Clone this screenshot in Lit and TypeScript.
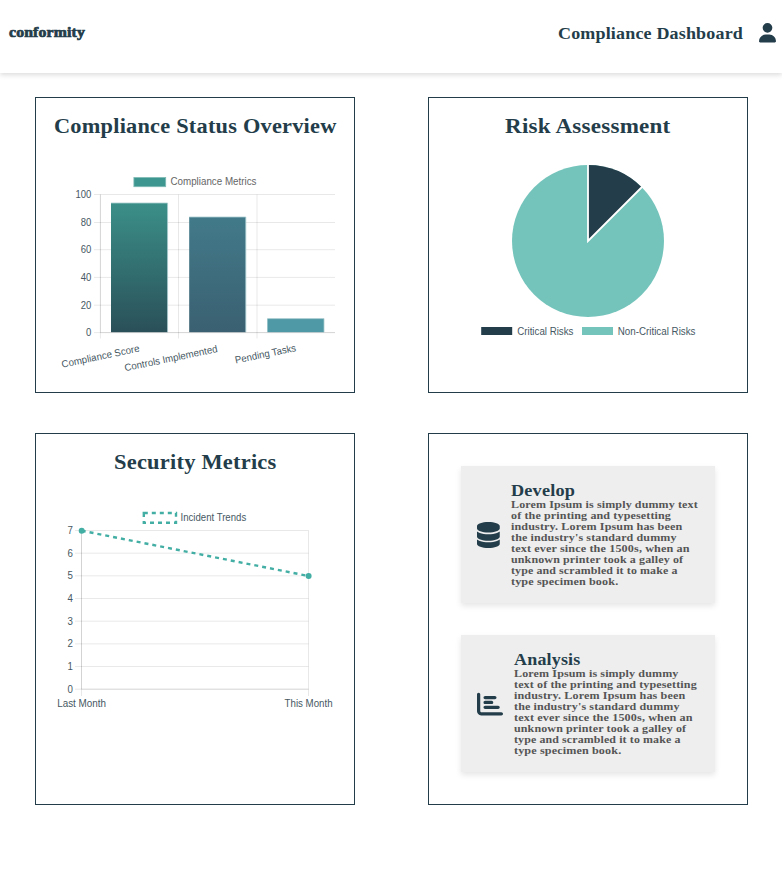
import { LitElement, html, svg, css } from "lit";
import { customElement, property } from "lit/decorators.js";

type Line = [text: string, width: number];

/** A single line of serif text set to a given measure. */
const fitted = (text: string, width: number, size: number, height: number, baseline: number) => html`
  <svg class="line" width=${width} height=${height}>
    <text x="0" y=${baseline} font-size=${size} textLength=${width} lengthAdjust="spacingAndGlyphs">${text}</text>
  </svg>`;

const label = (x: number, y: number, w: number, text: string, cls = "label") =>
  svg`<text class=${cls} x=${x} y=${y} textLength=${w} lengthAdjust="spacingAndGlyphs">${text}</text>`;

const USER = "M224 256A128 128 0 1 0 224 0a128 128 0 1 0 0 256zm-45.7 48C79.8 304 0 383.8 0 482.3C0 498.7 13.3 512 29.7 512H418.3c16.4 0 29.7-13.3 29.7-29.7C448 383.8 368.2 304 269.7 304H178.3z";
const DATABASE = "M448 80v48c0 44.2-100.3 80-224 80S0 172.2 0 128V80C0 35.8 100.3 0 224 0S448 35.8 448 80zM393.2 214.7c20.8-7.4 39.9-16.9 54.8-28.6V288c0 44.2-100.3 80-224 80S0 332.2 0 288V186.1c14.9 11.8 34 21.2 54.8 28.6C99.7 230.7 159.5 240 224 240s124.3-9.3 169.2-25.3zM0 346.1c14.9 11.8 34 21.2 54.8 28.6C99.7 390.7 159.5 400 224 400s124.3-9.3 169.2-25.3c20.8-7.4 39.9-16.9 54.8-28.6V432c0 44.2-100.3 80-224 80S0 476.2 0 432V346.1z";
const CHART = "M32 32c17.7 0 32 14.3 32 32V400c0 8.8 7.2 16 16 16H480c17.7 0 32 14.3 32 32s-14.3 32-32 32H80c-44.2 0-80-35.8-80-80V64C0 46.3 14.3 32 32 32zm96 96c0-17.7 14.3-32 32-32l192 0c17.7 0 32 14.3 32 32s-14.3 32-32 32l-192 0c-17.7 0-32-14.3-32-32zm32 64H288c17.7 0 32 14.3 32 32s-14.3 32-32 32H160c-17.7 0-32-14.3-32-32s14.3-32 32-32zm0 96H416c17.7 0 32 14.3 32 32s-14.3 32-32 32H160c-17.7 0-32-14.3-32-32s14.3-32 32-32z";

const shared = css`
  svg { display: block; flex: none; }
  .line { overflow: visible; }
  .line text { font-family: Georgia, "Liberation Serif", serif; font-weight: 700; fill: currentColor; letter-spacing: 0.01em; }
  .chart { font: 10px "Liberation Sans", sans-serif; overflow: visible; }
  .label { fill: #465863; }
  .muted { fill: #666; }
  .grid { stroke: #000; stroke-opacity: 0.09; stroke-width: 1; fill: none; }
  .axis { stroke: #000; stroke-opacity: 0.09; stroke-width: 1; fill: none; }
`;

@customElement("bar-chart")
class BarChart extends LitElement {
  static styles = [shared, css`:host { display: block; }`];
  render() {
    const rows: [string, number, number][] = [
      ["100", 194.5, 15.8], ["80", 222.5, 10.6], ["60", 249.7, 10.6],
      ["40", 277.4, 10.6], ["20", 305.2, 10.6], ["0", 332.6, 5.3],
    ];
    const bars = [
      { x: 111, y: 203, fill: "url(#g1)" },
      { x: 189.2, y: 217, fill: "url(#g2)" },
      { x: 267.4, y: 318.6, fill: "#4f98a5" },
    ];
    return html`<svg class="chart" width="318" height="240" viewBox="36 152 318 240">
      <defs>
        <linearGradient id="g1" x1="0" y1="0" x2="0" y2="1"><stop offset="0" stop-color="#3b8f89"/><stop offset="1" stop-color="#2a5059"/></linearGradient>
        <linearGradient id="g2" x1="0" y1="0" x2="0" y2="1"><stop offset="0" stop-color="#427a8a"/><stop offset="1" stop-color="#3a6071"/></linearGradient>
      </defs>
      <rect x="133.9" y="177.5" width="31.8" height="9.2" fill="#3d968f" stroke="#7fbab5" stroke-width=".8"/>
      ${label(170.5, 185, 86, "Compliance Metrics", "muted")}
      ${rows.map(([t, y, w]) => svg`<path class="grid" d="M94 ${y}H335"/>${label(91.3 - w, y + 3.4, w, t)}`)}
      ${[100.4, 178.5, 257].map((x) => svg`<path class="grid" d="M${x} 194.5V338.5"/>`)}
      <path class="axis" d="M100.4 194.5V332.6H335"/>
      ${bars.map((b) => svg`<rect x=${b.x} y=${b.y} width="56.6" height=${332.2 - b.y} fill=${b.fill}/>
        <path d="M${b.x} ${b.y}h56.6V332.2" fill="none" stroke="#a9cdd0" stroke-width=".8"/>`)}
      <g transform="translate(62.3 367.7) rotate(-11.8)">${label(0, 0, 79.3, "Compliance Score")}</g>
      <g transform="translate(125.2 371.3) rotate(-11.8)">${label(0, 0, 94.8, "Controls Implemented")}</g>
      <g transform="translate(235.8 363.6) rotate(-11.8)">${label(0, 0, 62, "Pending Tasks")}</g>
    </svg>`;
  }
}

@customElement("pie-chart")
class PieChart extends LitElement {
  static styles = [shared, css`:host { display: block; }`];
  render() {
    const d = 76 * Math.SQRT1_2;
    return html`<svg class="chart" width="318" height="240" viewBox="429 152 318 240">
      <circle cx="588" cy="241" r="76" fill="#74c4bb"/>
      <path d="M588 241V165A76 76 0 0 1 ${588 + d} ${241 - d}Z" fill="#243d4a"/>
      <path d="M588 164V241L${589 + d} ${240 - d}" fill="none" stroke="#fff" stroke-width="1.8"/>
      <rect x="481.2" y="327" width="31" height="8" fill="#243d4a"/>
      ${label(517.2, 334.7, 56.3, "Critical Risks")}
      <rect x="582" y="327" width="31" height="8" fill="#74c4bb"/>
      ${label(617.8, 334.7, 77.7, "Non-Critical Risks")}
    </svg>`;
  }
}

@customElement("line-chart")
class LineChart extends LitElement {
  static styles = [shared, css`:host { display: block; } .trend { fill: none; stroke: #43aea4; stroke-width: 2.4; stroke-dasharray: 4 4; }`];
  render() {
    const ys = [7, 6, 5, 4, 3, 2, 1, 0].map((n) => ({ n, y: 689.2 - n * 22.67 }));
    return html`<svg class="chart" width="318" height="300" viewBox="36 488 318 300">
      <rect class="trend" x="143.8" y="513" width="32.2" height="9.8"/>
      ${label(180.5, 521, 65.7, "Incident Trends")}
      ${ys.map(({ n, y }) => svg`<path class="grid" d="M75 ${y}H308.5"/>${label(67.5, y + 3.4, 5.4, String(n))}`)}
      <path class="grid" d="M81.5 530.5V696M308.5 530.5V696"/>
      <path class="axis" d="M81.5 530.5V689.2H308.5"/>
      <path class="trend" d="M81.7 530.7L308.6 576"/>
      <circle cx="81.7" cy="530.8" r="3" fill="#43aea4"/>
      <circle cx="308.6" cy="576" r="3" fill="#43aea4"/>
      ${label(57.2, 707.3, 48.8, "Last Month")}
      ${label(284.6, 707.3, 48, "This Month")}
    </svg>`;
  }
}

@customElement("info-card")
class InfoCard extends LitElement {
  static styles = [shared, css`
    :host { display: flex; align-items: center; box-sizing: border-box; width: 254px; height: 137px; padding-left: 16px; background: #eee; color: #243d4a; box-shadow: 0 3px 6px rgba(0, 0, 0, 0.1); }
    .body { color: #555; }
    .text { display: flex; flex-direction: column; margin-left: 11.3px; }
  `];
  @property({ attribute: false }) icon = "";
  @property({ attribute: false }) box = 448;
  @property({ attribute: false }) heading: Line = ["", 0];
  @property({ attribute: false }) lines: Line[] = [];
  render() {
    return html`
      <svg width=${(this.box / 512) * 26} height="26" viewBox="0 0 ${this.box} 512"><path fill="currentColor" d=${this.icon}/></svg>
      <div class="text">
        ${fitted(this.heading[0], this.heading[1], 16.6, 18, 14.3)}
        <div class="body">${this.lines.map(([t, w]) => fitted(t, w + 0.3, 10.5, 11, 8.4))}</div>
      </div>`;
  }
}

@customElement("app-root")
class AppRoot extends LitElement {
  static styles = [shared, css`
    :host { display: block; height: 887px; background: #fff; color: #243d4a; overflow: hidden; }
    header { display: flex; align-items: center; box-sizing: border-box; height: 73px; padding: 0 6px 7px 9px; box-shadow: 0 2px 5px rgba(0, 0, 0, 0.14); }
    .brand { margin-right: auto; }
    .brand text { stroke: currentColor; stroke-width: 0.7px; }
    .user { margin-left: 16px; }
    main { display: grid; grid-template-columns: 320px 320px; grid-template-rows: 296px 372px; gap: 40px 73px; padding: 24px 0 0 35px; }
    section { box-sizing: border-box; border: 1px solid #243d4a; display: flex; flex-direction: column; align-items: center; }
    .title { height: 36px; padding-top: 18px; }
    .cards { gap: 32px; padding-top: 32px; }
  `];
  render() {
    const title = (t: string, w: number) => html`<div class="title">${fitted(t, w, 20.8, 24, 16.5)}</div>`;
    const tail: Line[] = [
      ["the industry's standard dummy", 165.3], ["text ever since the 1500s, when an", 178.4],
      ["unknown printer took a galley of", 171.9], ["type and scrambled it to make a", 166.2], ["type specimen book.", 107],
    ];
    return html`
      <header>
        <div class="brand">${fitted("conformity", 76, 14, 18, 12.6)}</div>
        ${fitted("Compliance Dashboard", 185, 16.8, 20, 16.4)}
        <svg class="user" width="17" height="19.4" viewBox="0 0 448 512"><path fill="currentColor" d=${USER}/></svg>
      </header>
      <main>
        <section>${title("Compliance Status Overview", 282.5)}<bar-chart></bar-chart></section>
        <section>${title("Risk Assessment", 165.5)}<pie-chart></pie-chart></section>
        <section>${title("Security Metrics", 162.5)}<line-chart></line-chart></section>
        <section class="cards">
          <info-card .icon=${DATABASE} .box=${448} .heading=${["Develop", 64]}
            .lines=${[["Lorem Ipsum is simply dummy text", 186.5], ["of the printing and typesetting", 159.7], ["industry. Lorem Ipsum has been", 171], ...tail]}></info-card>
          <info-card .icon=${CHART} .box=${512} .heading=${["Analysis", 66.5]}
            .lines=${[["Lorem Ipsum is simply dummy", 164.2], ["text of the printing and typesetting", 182.5], ["industry. Lorem Ipsum has been", 171], ...tail]}></info-card>
        </section>
      </main>`;
  }
}
